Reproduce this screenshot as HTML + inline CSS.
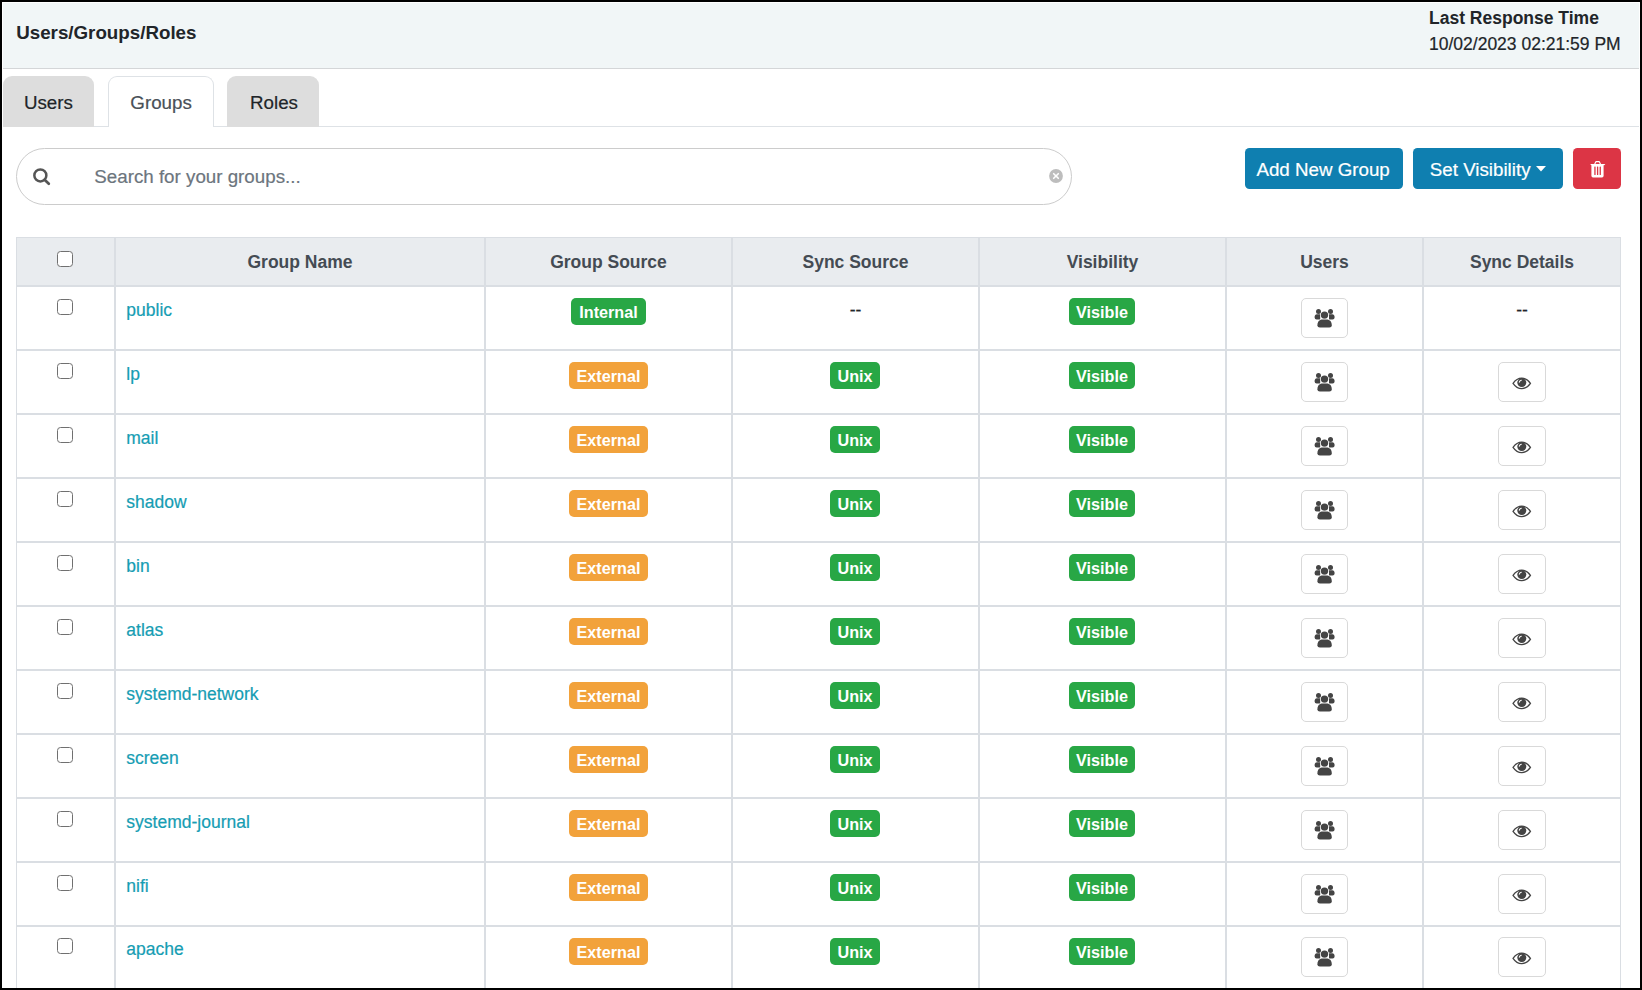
<!DOCTYPE html>
<html><head><meta charset="utf-8"><title>Users/Groups/Roles</title><style>
*{margin:0;padding:0;box-sizing:border-box}
html,body{width:1642px;height:990px;overflow:hidden;background:#000}
body{font-family:"Liberation Sans",sans-serif;position:relative}
.a{position:absolute;line-height:1;white-space:nowrap}
.r{-webkit-text-stroke:0.2px currentColor}

#frame{position:absolute;left:2px;top:2px;width:1638px;height:986px;background:#fff;overflow:hidden}
</style></head>
<body>
<div class="a" style="left:2px;top:2px;width:1638px;height:986px;background:#fff;overflow:hidden">
<div class="a" style="left:-2px;top:-2px;width:1642px;height:990px">
<div class="a" style="left:3px;top:3px;width:1636px;height:65px;background:#f1f6f7"></div>
<div class="a" style="left:3px;top:68px;width:1636px;height:1px;background:#d4d6d8"></div>
<div class="a" style="left:16.2px;top:24.03px;font-size:18.75px;font-weight:bold;color:#212529">Users/Groups/Roles</div>
<div class="a" style="left:1429px;top:10.09px;font-size:17.5px;font-weight:bold;color:#212529">Last Response Time</div>
<div class="a r" style="left:1429px;top:35.99px;font-size:17.5px;color:#212529">10/02/2023 02:21:59 PM</div>
<div class="a" style="left:3px;top:126px;width:1636px;height:1px;background:#dee2e6"></div>
<div class="a" style="left:3px;top:76px;width:91px;height:51px;background:#dddddd;border-radius:9px 9px 0 0"></div>
<div class="a" style="left:108px;top:76px;width:106px;height:51px;background:#fff;border:1px solid #dee2e6;border-bottom:none;border-radius:9px 9px 0 0"></div>
<div class="a" style="left:227px;top:76px;width:92px;height:51px;background:#dddddd;border-radius:9px 9px 0 0"></div>
<div class="a r" style="left:23.9px;top:94.13px;font-size:18.75px;color:#212529">Users</div>
<div class="a r" style="left:130.3px;top:94.13px;font-size:18.75px;color:#495057">Groups</div>
<div class="a r" style="left:250px;top:94.13px;font-size:18.75px;color:#212529">Roles</div>
<div class="a" style="left:16px;top:148px;width:1056px;height:57px;border:1px solid #cccccc;border-radius:28.5px;background:#fff"></div>
<svg class="a" style="left:33px;top:168px" width="18" height="18" viewBox="0 0 18 18"><circle cx="7.35" cy="7.45" r="6.0" fill="none" stroke="#555" stroke-width="2.5"/><line x1="11.6" y1="11.7" x2="15.8" y2="15.8" stroke="#555" stroke-width="2.7" stroke-linecap="round"/></svg>
<div class="a r" style="left:94.3px;top:168.33px;font-size:18.75px;color:#6c757d">Search for your groups...</div>
<svg class="a" style="left:1049px;top:169.2px" width="14" height="14" viewBox="0 0 14 14"><circle cx="7" cy="7" r="6.9" fill="#bdbdbd"/><path d="M4.7 4.7L9.3 9.3M9.3 4.7L4.7 9.3" stroke="#fff" stroke-width="1.6" stroke-linecap="round"/></svg>
<div class="a" style="left:1245px;top:148px;width:158px;height:41px;background:#0f7fb0;border-radius:4.5px"></div>
<div class="a r" style="left:1256.4px;top:161.13px;font-size:18.75px;color:#fff">Add New Group</div>
<div class="a" style="left:1413px;top:148px;width:150px;height:41px;background:#0f7fb0;border-radius:4.5px"></div>
<div class="a r" style="left:1429.8px;top:161.13px;font-size:18.75px;color:#fff">Set Visibility</div>
<svg class="a" style="left:1536px;top:165.5px" width="10" height="6" viewBox="0 0 10 6"><path d="M0 0H10L5 5.5Z" fill="#fff"/></svg>
<div class="a" style="left:1573px;top:148px;width:48px;height:41px;background:#dc3545;border-radius:4.5px"></div>
<svg class="a" style="left:1589.5px;top:160.9px" width="16" height="17" viewBox="0 0 16 17"><path d="M4.7 3.2 L5.6 1.2 Q5.9 0.55 6.6 0.55 H8.6 Q9.3 0.55 9.6 1.2 L10.5 3.2" fill="none" stroke="#fff" stroke-width="1.15"/><path d="M0.1 2.9 H15.4 L14.2 4.3 H1.3 Z" fill="#fff"/><path d="M1.4 4.1 H13.6 V14.8 Q13.6 16.4 12 16.4 H3 Q1.4 16.4 1.4 14.8 Z" fill="#fff"/><rect x="4.3" y="5.5" width="1.3" height="8.5" rx="0.5" fill="#dc3545"/><rect x="6.95" y="5.5" width="1.3" height="8.5" rx="0.5" fill="#dc3545"/><rect x="9.6" y="5.5" width="1.3" height="8.5" rx="0.5" fill="#dc3545"/></svg>
<div class="a" style="left:16px;top:237px;width:1605px;height:50px;background:#e9ecef"></div>
<div class="a" style="left:16px;top:237px;width:1605px;height:1px;background:#dadee3"></div>
<div class="a" style="left:16px;top:285px;width:1605px;height:2px;background:#dadee3"></div>
<div class="a" style="left:16px;top:349px;width:1605px;height:2px;background:#dadee3"></div>
<div class="a" style="left:16px;top:413px;width:1605px;height:2px;background:#dadee3"></div>
<div class="a" style="left:16px;top:477px;width:1605px;height:2px;background:#dadee3"></div>
<div class="a" style="left:16px;top:541px;width:1605px;height:2px;background:#dadee3"></div>
<div class="a" style="left:16px;top:605px;width:1605px;height:2px;background:#dadee3"></div>
<div class="a" style="left:16px;top:669px;width:1605px;height:2px;background:#dadee3"></div>
<div class="a" style="left:16px;top:733px;width:1605px;height:2px;background:#dadee3"></div>
<div class="a" style="left:16px;top:797px;width:1605px;height:2px;background:#dadee3"></div>
<div class="a" style="left:16px;top:861px;width:1605px;height:2px;background:#dadee3"></div>
<div class="a" style="left:16px;top:925px;width:1605px;height:2px;background:#dadee3"></div>
<div class="a" style="left:16px;top:237px;width:1px;height:760px;background:#dadee3"></div>
<div class="a" style="left:114px;top:237px;width:2px;height:760px;background:#dadee3"></div>
<div class="a" style="left:484px;top:237px;width:2px;height:760px;background:#dadee3"></div>
<div class="a" style="left:731px;top:237px;width:2px;height:760px;background:#dadee3"></div>
<div class="a" style="left:978px;top:237px;width:2px;height:760px;background:#dadee3"></div>
<div class="a" style="left:1225px;top:237px;width:2px;height:760px;background:#dadee3"></div>
<div class="a" style="left:1422px;top:237px;width:2px;height:760px;background:#dadee3"></div>
<div class="a" style="left:1620px;top:237px;width:1px;height:760px;background:#dadee3"></div>
<div class="a" style="left:116px;width:368px;text-align:center;top:253.99px;font-size:17.5px;font-weight:bold;color:#444b53">Group Name</div>
<div class="a" style="left:486px;width:245px;text-align:center;top:253.99px;font-size:17.5px;font-weight:bold;color:#444b53">Group Source</div>
<div class="a" style="left:733px;width:245px;text-align:center;top:253.99px;font-size:17.5px;font-weight:bold;color:#444b53">Sync Source</div>
<div class="a" style="left:980px;width:245px;text-align:center;top:253.99px;font-size:17.5px;font-weight:bold;color:#444b53">Visibility</div>
<div class="a" style="left:1227px;width:195px;text-align:center;top:253.99px;font-size:17.5px;font-weight:bold;color:#444b53">Users</div>
<div class="a" style="left:1424px;width:196px;text-align:center;top:253.99px;font-size:17.5px;font-weight:bold;color:#444b53">Sync Details</div>
<div class="a" style="left:57px;top:251px;width:16px;height:16px;border:1.5px solid #707070;border-radius:3.5px;background:#fff"></div>
<div class="a" style="left:57px;top:299px;width:16px;height:16px;border:1.5px solid #707070;border-radius:3.5px;background:#fff"></div>
<div class="a r" style="left:126.3px;top:301.89px;font-size:17.5px;color:#169db3">public</div>
<div class="a" style="left:571px;top:298px;width:75px;height:27px;background:#28a745;border-radius:5px"></div>
<div class="a" style="left:571px;width:75px;text-align:center;top:304.05px;font-size:16.2px;font-weight:bold;color:#fff">Internal</div>
<div class="a r" style="left:733px;width:245px;text-align:center;top:301.89px;font-size:17.5px;color:#212529">--</div>
<div class="a r" style="left:1424px;width:196px;text-align:center;top:301.89px;font-size:17.5px;color:#212529">--</div>
<div class="a" style="left:1069px;top:298px;width:66px;height:27px;background:#28a745;border-radius:5px"></div>
<div class="a" style="left:1069px;width:66px;text-align:center;top:304.05px;font-size:16.2px;font-weight:bold;color:#fff">Visible</div>
<div class="a" style="left:1301px;top:298px;width:47px;height:40px;border:1px solid #d9d9d9;border-radius:5px;background:#fff"></div>
<div class="a" style="left:1314px;top:308px"><svg width="22" height="21" viewBox="0 0 22 21" style="display:block"><circle cx="4.5" cy="3.4" r="2.5" fill="#444"/><circle cx="16.5" cy="3.4" r="2.5" fill="#444"/><path d="M0.6 9.6 Q0.4 6.3 3 6.2 H6.2 V11.5 H2.6 Q0.7 11.5 0.6 9.6 Z" fill="#444"/><path d="M20.6 9.6 Q20.8 6.3 18.2 6.2 H15 V11.5 H18.6 Q20.5 11.5 20.6 9.6 Z" fill="#444"/><g stroke="#fff" stroke-width="0.9" paint-order="stroke" fill="#444"><circle cx="10.5" cy="7.1" r="3.7"/><path d="M3.4 17.2 C3.4 13.6 5.2 11.4 8.6 11.4 H12.6 C16 11.4 17.8 13.6 17.8 17.2 Q17.8 19.6 15.4 19.6 H5.8 Q3.4 19.6 3.4 17.2 Z"/></g></svg></div>
<div class="a" style="left:57px;top:363px;width:16px;height:16px;border:1.5px solid #707070;border-radius:3.5px;background:#fff"></div>
<div class="a r" style="left:126.3px;top:365.89px;font-size:17.5px;color:#169db3">lp</div>
<div class="a" style="left:569px;top:362px;width:79px;height:27px;background:#f2a23b;border-radius:5px"></div>
<div class="a" style="left:569px;width:79px;text-align:center;top:368.05px;font-size:16.2px;font-weight:bold;color:#fff">External</div>
<div class="a" style="left:830px;top:362px;width:50px;height:27px;background:#28a745;border-radius:5px"></div>
<div class="a" style="left:830px;width:50px;text-align:center;top:368.05px;font-size:16.2px;font-weight:bold;color:#fff">Unix</div>
<div class="a" style="left:1498px;top:362px;width:48px;height:40px;border:1px solid #d9d9d9;border-radius:5px;background:#fff"></div>
<div class="a" style="left:1512px;top:376.5px"><svg width="20" height="13" viewBox="0 0 20 13" style="display:block"><path d="M1.05 6.4 C3.5 2.8 6.5 1.15 9.75 1.15 C13 1.15 16 2.8 18.45 6.4 C16 10 13 11.65 9.75 11.65 C6.5 11.65 3.5 10 1.05 6.4 Z" fill="none" stroke="#444" stroke-width="1.3"/><circle cx="9.8" cy="5.6" r="4.5" fill="#444"/><path d="M7.3 5.2 Q7.7 3.6 9.3 3.2" fill="none" stroke="#fff" stroke-width="1.1" stroke-linecap="round"/></svg></div>
<div class="a" style="left:1069px;top:362px;width:66px;height:27px;background:#28a745;border-radius:5px"></div>
<div class="a" style="left:1069px;width:66px;text-align:center;top:368.05px;font-size:16.2px;font-weight:bold;color:#fff">Visible</div>
<div class="a" style="left:1301px;top:362px;width:47px;height:40px;border:1px solid #d9d9d9;border-radius:5px;background:#fff"></div>
<div class="a" style="left:1314px;top:372px"><svg width="22" height="21" viewBox="0 0 22 21" style="display:block"><circle cx="4.5" cy="3.4" r="2.5" fill="#444"/><circle cx="16.5" cy="3.4" r="2.5" fill="#444"/><path d="M0.6 9.6 Q0.4 6.3 3 6.2 H6.2 V11.5 H2.6 Q0.7 11.5 0.6 9.6 Z" fill="#444"/><path d="M20.6 9.6 Q20.8 6.3 18.2 6.2 H15 V11.5 H18.6 Q20.5 11.5 20.6 9.6 Z" fill="#444"/><g stroke="#fff" stroke-width="0.9" paint-order="stroke" fill="#444"><circle cx="10.5" cy="7.1" r="3.7"/><path d="M3.4 17.2 C3.4 13.6 5.2 11.4 8.6 11.4 H12.6 C16 11.4 17.8 13.6 17.8 17.2 Q17.8 19.6 15.4 19.6 H5.8 Q3.4 19.6 3.4 17.2 Z"/></g></svg></div>
<div class="a" style="left:57px;top:427px;width:16px;height:16px;border:1.5px solid #707070;border-radius:3.5px;background:#fff"></div>
<div class="a r" style="left:126.3px;top:429.89px;font-size:17.5px;color:#169db3">mail</div>
<div class="a" style="left:569px;top:426px;width:79px;height:27px;background:#f2a23b;border-radius:5px"></div>
<div class="a" style="left:569px;width:79px;text-align:center;top:432.05px;font-size:16.2px;font-weight:bold;color:#fff">External</div>
<div class="a" style="left:830px;top:426px;width:50px;height:27px;background:#28a745;border-radius:5px"></div>
<div class="a" style="left:830px;width:50px;text-align:center;top:432.05px;font-size:16.2px;font-weight:bold;color:#fff">Unix</div>
<div class="a" style="left:1498px;top:426px;width:48px;height:40px;border:1px solid #d9d9d9;border-radius:5px;background:#fff"></div>
<div class="a" style="left:1512px;top:440.5px"><svg width="20" height="13" viewBox="0 0 20 13" style="display:block"><path d="M1.05 6.4 C3.5 2.8 6.5 1.15 9.75 1.15 C13 1.15 16 2.8 18.45 6.4 C16 10 13 11.65 9.75 11.65 C6.5 11.65 3.5 10 1.05 6.4 Z" fill="none" stroke="#444" stroke-width="1.3"/><circle cx="9.8" cy="5.6" r="4.5" fill="#444"/><path d="M7.3 5.2 Q7.7 3.6 9.3 3.2" fill="none" stroke="#fff" stroke-width="1.1" stroke-linecap="round"/></svg></div>
<div class="a" style="left:1069px;top:426px;width:66px;height:27px;background:#28a745;border-radius:5px"></div>
<div class="a" style="left:1069px;width:66px;text-align:center;top:432.05px;font-size:16.2px;font-weight:bold;color:#fff">Visible</div>
<div class="a" style="left:1301px;top:426px;width:47px;height:40px;border:1px solid #d9d9d9;border-radius:5px;background:#fff"></div>
<div class="a" style="left:1314px;top:436px"><svg width="22" height="21" viewBox="0 0 22 21" style="display:block"><circle cx="4.5" cy="3.4" r="2.5" fill="#444"/><circle cx="16.5" cy="3.4" r="2.5" fill="#444"/><path d="M0.6 9.6 Q0.4 6.3 3 6.2 H6.2 V11.5 H2.6 Q0.7 11.5 0.6 9.6 Z" fill="#444"/><path d="M20.6 9.6 Q20.8 6.3 18.2 6.2 H15 V11.5 H18.6 Q20.5 11.5 20.6 9.6 Z" fill="#444"/><g stroke="#fff" stroke-width="0.9" paint-order="stroke" fill="#444"><circle cx="10.5" cy="7.1" r="3.7"/><path d="M3.4 17.2 C3.4 13.6 5.2 11.4 8.6 11.4 H12.6 C16 11.4 17.8 13.6 17.8 17.2 Q17.8 19.6 15.4 19.6 H5.8 Q3.4 19.6 3.4 17.2 Z"/></g></svg></div>
<div class="a" style="left:57px;top:491px;width:16px;height:16px;border:1.5px solid #707070;border-radius:3.5px;background:#fff"></div>
<div class="a r" style="left:126.3px;top:493.89px;font-size:17.5px;color:#169db3">shadow</div>
<div class="a" style="left:569px;top:490px;width:79px;height:27px;background:#f2a23b;border-radius:5px"></div>
<div class="a" style="left:569px;width:79px;text-align:center;top:496.05px;font-size:16.2px;font-weight:bold;color:#fff">External</div>
<div class="a" style="left:830px;top:490px;width:50px;height:27px;background:#28a745;border-radius:5px"></div>
<div class="a" style="left:830px;width:50px;text-align:center;top:496.05px;font-size:16.2px;font-weight:bold;color:#fff">Unix</div>
<div class="a" style="left:1498px;top:490px;width:48px;height:40px;border:1px solid #d9d9d9;border-radius:5px;background:#fff"></div>
<div class="a" style="left:1512px;top:504.5px"><svg width="20" height="13" viewBox="0 0 20 13" style="display:block"><path d="M1.05 6.4 C3.5 2.8 6.5 1.15 9.75 1.15 C13 1.15 16 2.8 18.45 6.4 C16 10 13 11.65 9.75 11.65 C6.5 11.65 3.5 10 1.05 6.4 Z" fill="none" stroke="#444" stroke-width="1.3"/><circle cx="9.8" cy="5.6" r="4.5" fill="#444"/><path d="M7.3 5.2 Q7.7 3.6 9.3 3.2" fill="none" stroke="#fff" stroke-width="1.1" stroke-linecap="round"/></svg></div>
<div class="a" style="left:1069px;top:490px;width:66px;height:27px;background:#28a745;border-radius:5px"></div>
<div class="a" style="left:1069px;width:66px;text-align:center;top:496.05px;font-size:16.2px;font-weight:bold;color:#fff">Visible</div>
<div class="a" style="left:1301px;top:490px;width:47px;height:40px;border:1px solid #d9d9d9;border-radius:5px;background:#fff"></div>
<div class="a" style="left:1314px;top:500px"><svg width="22" height="21" viewBox="0 0 22 21" style="display:block"><circle cx="4.5" cy="3.4" r="2.5" fill="#444"/><circle cx="16.5" cy="3.4" r="2.5" fill="#444"/><path d="M0.6 9.6 Q0.4 6.3 3 6.2 H6.2 V11.5 H2.6 Q0.7 11.5 0.6 9.6 Z" fill="#444"/><path d="M20.6 9.6 Q20.8 6.3 18.2 6.2 H15 V11.5 H18.6 Q20.5 11.5 20.6 9.6 Z" fill="#444"/><g stroke="#fff" stroke-width="0.9" paint-order="stroke" fill="#444"><circle cx="10.5" cy="7.1" r="3.7"/><path d="M3.4 17.2 C3.4 13.6 5.2 11.4 8.6 11.4 H12.6 C16 11.4 17.8 13.6 17.8 17.2 Q17.8 19.6 15.4 19.6 H5.8 Q3.4 19.6 3.4 17.2 Z"/></g></svg></div>
<div class="a" style="left:57px;top:555px;width:16px;height:16px;border:1.5px solid #707070;border-radius:3.5px;background:#fff"></div>
<div class="a r" style="left:126.3px;top:557.89px;font-size:17.5px;color:#169db3">bin</div>
<div class="a" style="left:569px;top:554px;width:79px;height:27px;background:#f2a23b;border-radius:5px"></div>
<div class="a" style="left:569px;width:79px;text-align:center;top:560.05px;font-size:16.2px;font-weight:bold;color:#fff">External</div>
<div class="a" style="left:830px;top:554px;width:50px;height:27px;background:#28a745;border-radius:5px"></div>
<div class="a" style="left:830px;width:50px;text-align:center;top:560.05px;font-size:16.2px;font-weight:bold;color:#fff">Unix</div>
<div class="a" style="left:1498px;top:554px;width:48px;height:40px;border:1px solid #d9d9d9;border-radius:5px;background:#fff"></div>
<div class="a" style="left:1512px;top:568.5px"><svg width="20" height="13" viewBox="0 0 20 13" style="display:block"><path d="M1.05 6.4 C3.5 2.8 6.5 1.15 9.75 1.15 C13 1.15 16 2.8 18.45 6.4 C16 10 13 11.65 9.75 11.65 C6.5 11.65 3.5 10 1.05 6.4 Z" fill="none" stroke="#444" stroke-width="1.3"/><circle cx="9.8" cy="5.6" r="4.5" fill="#444"/><path d="M7.3 5.2 Q7.7 3.6 9.3 3.2" fill="none" stroke="#fff" stroke-width="1.1" stroke-linecap="round"/></svg></div>
<div class="a" style="left:1069px;top:554px;width:66px;height:27px;background:#28a745;border-radius:5px"></div>
<div class="a" style="left:1069px;width:66px;text-align:center;top:560.05px;font-size:16.2px;font-weight:bold;color:#fff">Visible</div>
<div class="a" style="left:1301px;top:554px;width:47px;height:40px;border:1px solid #d9d9d9;border-radius:5px;background:#fff"></div>
<div class="a" style="left:1314px;top:564px"><svg width="22" height="21" viewBox="0 0 22 21" style="display:block"><circle cx="4.5" cy="3.4" r="2.5" fill="#444"/><circle cx="16.5" cy="3.4" r="2.5" fill="#444"/><path d="M0.6 9.6 Q0.4 6.3 3 6.2 H6.2 V11.5 H2.6 Q0.7 11.5 0.6 9.6 Z" fill="#444"/><path d="M20.6 9.6 Q20.8 6.3 18.2 6.2 H15 V11.5 H18.6 Q20.5 11.5 20.6 9.6 Z" fill="#444"/><g stroke="#fff" stroke-width="0.9" paint-order="stroke" fill="#444"><circle cx="10.5" cy="7.1" r="3.7"/><path d="M3.4 17.2 C3.4 13.6 5.2 11.4 8.6 11.4 H12.6 C16 11.4 17.8 13.6 17.8 17.2 Q17.8 19.6 15.4 19.6 H5.8 Q3.4 19.6 3.4 17.2 Z"/></g></svg></div>
<div class="a" style="left:57px;top:619px;width:16px;height:16px;border:1.5px solid #707070;border-radius:3.5px;background:#fff"></div>
<div class="a r" style="left:126.3px;top:621.89px;font-size:17.5px;color:#169db3">atlas</div>
<div class="a" style="left:569px;top:618px;width:79px;height:27px;background:#f2a23b;border-radius:5px"></div>
<div class="a" style="left:569px;width:79px;text-align:center;top:624.05px;font-size:16.2px;font-weight:bold;color:#fff">External</div>
<div class="a" style="left:830px;top:618px;width:50px;height:27px;background:#28a745;border-radius:5px"></div>
<div class="a" style="left:830px;width:50px;text-align:center;top:624.05px;font-size:16.2px;font-weight:bold;color:#fff">Unix</div>
<div class="a" style="left:1498px;top:618px;width:48px;height:40px;border:1px solid #d9d9d9;border-radius:5px;background:#fff"></div>
<div class="a" style="left:1512px;top:632.5px"><svg width="20" height="13" viewBox="0 0 20 13" style="display:block"><path d="M1.05 6.4 C3.5 2.8 6.5 1.15 9.75 1.15 C13 1.15 16 2.8 18.45 6.4 C16 10 13 11.65 9.75 11.65 C6.5 11.65 3.5 10 1.05 6.4 Z" fill="none" stroke="#444" stroke-width="1.3"/><circle cx="9.8" cy="5.6" r="4.5" fill="#444"/><path d="M7.3 5.2 Q7.7 3.6 9.3 3.2" fill="none" stroke="#fff" stroke-width="1.1" stroke-linecap="round"/></svg></div>
<div class="a" style="left:1069px;top:618px;width:66px;height:27px;background:#28a745;border-radius:5px"></div>
<div class="a" style="left:1069px;width:66px;text-align:center;top:624.05px;font-size:16.2px;font-weight:bold;color:#fff">Visible</div>
<div class="a" style="left:1301px;top:618px;width:47px;height:40px;border:1px solid #d9d9d9;border-radius:5px;background:#fff"></div>
<div class="a" style="left:1314px;top:628px"><svg width="22" height="21" viewBox="0 0 22 21" style="display:block"><circle cx="4.5" cy="3.4" r="2.5" fill="#444"/><circle cx="16.5" cy="3.4" r="2.5" fill="#444"/><path d="M0.6 9.6 Q0.4 6.3 3 6.2 H6.2 V11.5 H2.6 Q0.7 11.5 0.6 9.6 Z" fill="#444"/><path d="M20.6 9.6 Q20.8 6.3 18.2 6.2 H15 V11.5 H18.6 Q20.5 11.5 20.6 9.6 Z" fill="#444"/><g stroke="#fff" stroke-width="0.9" paint-order="stroke" fill="#444"><circle cx="10.5" cy="7.1" r="3.7"/><path d="M3.4 17.2 C3.4 13.6 5.2 11.4 8.6 11.4 H12.6 C16 11.4 17.8 13.6 17.8 17.2 Q17.8 19.6 15.4 19.6 H5.8 Q3.4 19.6 3.4 17.2 Z"/></g></svg></div>
<div class="a" style="left:57px;top:683px;width:16px;height:16px;border:1.5px solid #707070;border-radius:3.5px;background:#fff"></div>
<div class="a r" style="left:126.3px;top:685.89px;font-size:17.5px;color:#169db3">systemd-network</div>
<div class="a" style="left:569px;top:682px;width:79px;height:27px;background:#f2a23b;border-radius:5px"></div>
<div class="a" style="left:569px;width:79px;text-align:center;top:688.05px;font-size:16.2px;font-weight:bold;color:#fff">External</div>
<div class="a" style="left:830px;top:682px;width:50px;height:27px;background:#28a745;border-radius:5px"></div>
<div class="a" style="left:830px;width:50px;text-align:center;top:688.05px;font-size:16.2px;font-weight:bold;color:#fff">Unix</div>
<div class="a" style="left:1498px;top:682px;width:48px;height:40px;border:1px solid #d9d9d9;border-radius:5px;background:#fff"></div>
<div class="a" style="left:1512px;top:696.5px"><svg width="20" height="13" viewBox="0 0 20 13" style="display:block"><path d="M1.05 6.4 C3.5 2.8 6.5 1.15 9.75 1.15 C13 1.15 16 2.8 18.45 6.4 C16 10 13 11.65 9.75 11.65 C6.5 11.65 3.5 10 1.05 6.4 Z" fill="none" stroke="#444" stroke-width="1.3"/><circle cx="9.8" cy="5.6" r="4.5" fill="#444"/><path d="M7.3 5.2 Q7.7 3.6 9.3 3.2" fill="none" stroke="#fff" stroke-width="1.1" stroke-linecap="round"/></svg></div>
<div class="a" style="left:1069px;top:682px;width:66px;height:27px;background:#28a745;border-radius:5px"></div>
<div class="a" style="left:1069px;width:66px;text-align:center;top:688.05px;font-size:16.2px;font-weight:bold;color:#fff">Visible</div>
<div class="a" style="left:1301px;top:682px;width:47px;height:40px;border:1px solid #d9d9d9;border-radius:5px;background:#fff"></div>
<div class="a" style="left:1314px;top:692px"><svg width="22" height="21" viewBox="0 0 22 21" style="display:block"><circle cx="4.5" cy="3.4" r="2.5" fill="#444"/><circle cx="16.5" cy="3.4" r="2.5" fill="#444"/><path d="M0.6 9.6 Q0.4 6.3 3 6.2 H6.2 V11.5 H2.6 Q0.7 11.5 0.6 9.6 Z" fill="#444"/><path d="M20.6 9.6 Q20.8 6.3 18.2 6.2 H15 V11.5 H18.6 Q20.5 11.5 20.6 9.6 Z" fill="#444"/><g stroke="#fff" stroke-width="0.9" paint-order="stroke" fill="#444"><circle cx="10.5" cy="7.1" r="3.7"/><path d="M3.4 17.2 C3.4 13.6 5.2 11.4 8.6 11.4 H12.6 C16 11.4 17.8 13.6 17.8 17.2 Q17.8 19.6 15.4 19.6 H5.8 Q3.4 19.6 3.4 17.2 Z"/></g></svg></div>
<div class="a" style="left:57px;top:747px;width:16px;height:16px;border:1.5px solid #707070;border-radius:3.5px;background:#fff"></div>
<div class="a r" style="left:126.3px;top:749.89px;font-size:17.5px;color:#169db3">screen</div>
<div class="a" style="left:569px;top:746px;width:79px;height:27px;background:#f2a23b;border-radius:5px"></div>
<div class="a" style="left:569px;width:79px;text-align:center;top:752.05px;font-size:16.2px;font-weight:bold;color:#fff">External</div>
<div class="a" style="left:830px;top:746px;width:50px;height:27px;background:#28a745;border-radius:5px"></div>
<div class="a" style="left:830px;width:50px;text-align:center;top:752.05px;font-size:16.2px;font-weight:bold;color:#fff">Unix</div>
<div class="a" style="left:1498px;top:746px;width:48px;height:40px;border:1px solid #d9d9d9;border-radius:5px;background:#fff"></div>
<div class="a" style="left:1512px;top:760.5px"><svg width="20" height="13" viewBox="0 0 20 13" style="display:block"><path d="M1.05 6.4 C3.5 2.8 6.5 1.15 9.75 1.15 C13 1.15 16 2.8 18.45 6.4 C16 10 13 11.65 9.75 11.65 C6.5 11.65 3.5 10 1.05 6.4 Z" fill="none" stroke="#444" stroke-width="1.3"/><circle cx="9.8" cy="5.6" r="4.5" fill="#444"/><path d="M7.3 5.2 Q7.7 3.6 9.3 3.2" fill="none" stroke="#fff" stroke-width="1.1" stroke-linecap="round"/></svg></div>
<div class="a" style="left:1069px;top:746px;width:66px;height:27px;background:#28a745;border-radius:5px"></div>
<div class="a" style="left:1069px;width:66px;text-align:center;top:752.05px;font-size:16.2px;font-weight:bold;color:#fff">Visible</div>
<div class="a" style="left:1301px;top:746px;width:47px;height:40px;border:1px solid #d9d9d9;border-radius:5px;background:#fff"></div>
<div class="a" style="left:1314px;top:756px"><svg width="22" height="21" viewBox="0 0 22 21" style="display:block"><circle cx="4.5" cy="3.4" r="2.5" fill="#444"/><circle cx="16.5" cy="3.4" r="2.5" fill="#444"/><path d="M0.6 9.6 Q0.4 6.3 3 6.2 H6.2 V11.5 H2.6 Q0.7 11.5 0.6 9.6 Z" fill="#444"/><path d="M20.6 9.6 Q20.8 6.3 18.2 6.2 H15 V11.5 H18.6 Q20.5 11.5 20.6 9.6 Z" fill="#444"/><g stroke="#fff" stroke-width="0.9" paint-order="stroke" fill="#444"><circle cx="10.5" cy="7.1" r="3.7"/><path d="M3.4 17.2 C3.4 13.6 5.2 11.4 8.6 11.4 H12.6 C16 11.4 17.8 13.6 17.8 17.2 Q17.8 19.6 15.4 19.6 H5.8 Q3.4 19.6 3.4 17.2 Z"/></g></svg></div>
<div class="a" style="left:57px;top:811px;width:16px;height:16px;border:1.5px solid #707070;border-radius:3.5px;background:#fff"></div>
<div class="a r" style="left:126.3px;top:813.89px;font-size:17.5px;color:#169db3">systemd-journal</div>
<div class="a" style="left:569px;top:810px;width:79px;height:27px;background:#f2a23b;border-radius:5px"></div>
<div class="a" style="left:569px;width:79px;text-align:center;top:816.05px;font-size:16.2px;font-weight:bold;color:#fff">External</div>
<div class="a" style="left:830px;top:810px;width:50px;height:27px;background:#28a745;border-radius:5px"></div>
<div class="a" style="left:830px;width:50px;text-align:center;top:816.05px;font-size:16.2px;font-weight:bold;color:#fff">Unix</div>
<div class="a" style="left:1498px;top:810px;width:48px;height:40px;border:1px solid #d9d9d9;border-radius:5px;background:#fff"></div>
<div class="a" style="left:1512px;top:824.5px"><svg width="20" height="13" viewBox="0 0 20 13" style="display:block"><path d="M1.05 6.4 C3.5 2.8 6.5 1.15 9.75 1.15 C13 1.15 16 2.8 18.45 6.4 C16 10 13 11.65 9.75 11.65 C6.5 11.65 3.5 10 1.05 6.4 Z" fill="none" stroke="#444" stroke-width="1.3"/><circle cx="9.8" cy="5.6" r="4.5" fill="#444"/><path d="M7.3 5.2 Q7.7 3.6 9.3 3.2" fill="none" stroke="#fff" stroke-width="1.1" stroke-linecap="round"/></svg></div>
<div class="a" style="left:1069px;top:810px;width:66px;height:27px;background:#28a745;border-radius:5px"></div>
<div class="a" style="left:1069px;width:66px;text-align:center;top:816.05px;font-size:16.2px;font-weight:bold;color:#fff">Visible</div>
<div class="a" style="left:1301px;top:810px;width:47px;height:40px;border:1px solid #d9d9d9;border-radius:5px;background:#fff"></div>
<div class="a" style="left:1314px;top:820px"><svg width="22" height="21" viewBox="0 0 22 21" style="display:block"><circle cx="4.5" cy="3.4" r="2.5" fill="#444"/><circle cx="16.5" cy="3.4" r="2.5" fill="#444"/><path d="M0.6 9.6 Q0.4 6.3 3 6.2 H6.2 V11.5 H2.6 Q0.7 11.5 0.6 9.6 Z" fill="#444"/><path d="M20.6 9.6 Q20.8 6.3 18.2 6.2 H15 V11.5 H18.6 Q20.5 11.5 20.6 9.6 Z" fill="#444"/><g stroke="#fff" stroke-width="0.9" paint-order="stroke" fill="#444"><circle cx="10.5" cy="7.1" r="3.7"/><path d="M3.4 17.2 C3.4 13.6 5.2 11.4 8.6 11.4 H12.6 C16 11.4 17.8 13.6 17.8 17.2 Q17.8 19.6 15.4 19.6 H5.8 Q3.4 19.6 3.4 17.2 Z"/></g></svg></div>
<div class="a" style="left:57px;top:875px;width:16px;height:16px;border:1.5px solid #707070;border-radius:3.5px;background:#fff"></div>
<div class="a r" style="left:126.3px;top:877.89px;font-size:17.5px;color:#169db3">nifi</div>
<div class="a" style="left:569px;top:874px;width:79px;height:27px;background:#f2a23b;border-radius:5px"></div>
<div class="a" style="left:569px;width:79px;text-align:center;top:880.05px;font-size:16.2px;font-weight:bold;color:#fff">External</div>
<div class="a" style="left:830px;top:874px;width:50px;height:27px;background:#28a745;border-radius:5px"></div>
<div class="a" style="left:830px;width:50px;text-align:center;top:880.05px;font-size:16.2px;font-weight:bold;color:#fff">Unix</div>
<div class="a" style="left:1498px;top:874px;width:48px;height:40px;border:1px solid #d9d9d9;border-radius:5px;background:#fff"></div>
<div class="a" style="left:1512px;top:888.5px"><svg width="20" height="13" viewBox="0 0 20 13" style="display:block"><path d="M1.05 6.4 C3.5 2.8 6.5 1.15 9.75 1.15 C13 1.15 16 2.8 18.45 6.4 C16 10 13 11.65 9.75 11.65 C6.5 11.65 3.5 10 1.05 6.4 Z" fill="none" stroke="#444" stroke-width="1.3"/><circle cx="9.8" cy="5.6" r="4.5" fill="#444"/><path d="M7.3 5.2 Q7.7 3.6 9.3 3.2" fill="none" stroke="#fff" stroke-width="1.1" stroke-linecap="round"/></svg></div>
<div class="a" style="left:1069px;top:874px;width:66px;height:27px;background:#28a745;border-radius:5px"></div>
<div class="a" style="left:1069px;width:66px;text-align:center;top:880.05px;font-size:16.2px;font-weight:bold;color:#fff">Visible</div>
<div class="a" style="left:1301px;top:874px;width:47px;height:40px;border:1px solid #d9d9d9;border-radius:5px;background:#fff"></div>
<div class="a" style="left:1314px;top:884px"><svg width="22" height="21" viewBox="0 0 22 21" style="display:block"><circle cx="4.5" cy="3.4" r="2.5" fill="#444"/><circle cx="16.5" cy="3.4" r="2.5" fill="#444"/><path d="M0.6 9.6 Q0.4 6.3 3 6.2 H6.2 V11.5 H2.6 Q0.7 11.5 0.6 9.6 Z" fill="#444"/><path d="M20.6 9.6 Q20.8 6.3 18.2 6.2 H15 V11.5 H18.6 Q20.5 11.5 20.6 9.6 Z" fill="#444"/><g stroke="#fff" stroke-width="0.9" paint-order="stroke" fill="#444"><circle cx="10.5" cy="7.1" r="3.7"/><path d="M3.4 17.2 C3.4 13.6 5.2 11.4 8.6 11.4 H12.6 C16 11.4 17.8 13.6 17.8 17.2 Q17.8 19.6 15.4 19.6 H5.8 Q3.4 19.6 3.4 17.2 Z"/></g></svg></div>
<div class="a" style="left:57px;top:938px;width:16px;height:16px;border:1.5px solid #707070;border-radius:3.5px;background:#fff"></div>
<div class="a r" style="left:126.3px;top:940.89px;font-size:17.5px;color:#169db3">apache</div>
<div class="a" style="left:569px;top:938px;width:79px;height:27px;background:#f2a23b;border-radius:5px"></div>
<div class="a" style="left:569px;width:79px;text-align:center;top:944.05px;font-size:16.2px;font-weight:bold;color:#fff">External</div>
<div class="a" style="left:830px;top:938px;width:50px;height:27px;background:#28a745;border-radius:5px"></div>
<div class="a" style="left:830px;width:50px;text-align:center;top:944.05px;font-size:16.2px;font-weight:bold;color:#fff">Unix</div>
<div class="a" style="left:1498px;top:937px;width:48px;height:40px;border:1px solid #d9d9d9;border-radius:5px;background:#fff"></div>
<div class="a" style="left:1512px;top:951.5px"><svg width="20" height="13" viewBox="0 0 20 13" style="display:block"><path d="M1.05 6.4 C3.5 2.8 6.5 1.15 9.75 1.15 C13 1.15 16 2.8 18.45 6.4 C16 10 13 11.65 9.75 11.65 C6.5 11.65 3.5 10 1.05 6.4 Z" fill="none" stroke="#444" stroke-width="1.3"/><circle cx="9.8" cy="5.6" r="4.5" fill="#444"/><path d="M7.3 5.2 Q7.7 3.6 9.3 3.2" fill="none" stroke="#fff" stroke-width="1.1" stroke-linecap="round"/></svg></div>
<div class="a" style="left:1069px;top:938px;width:66px;height:27px;background:#28a745;border-radius:5px"></div>
<div class="a" style="left:1069px;width:66px;text-align:center;top:944.05px;font-size:16.2px;font-weight:bold;color:#fff">Visible</div>
<div class="a" style="left:1301px;top:937px;width:47px;height:40px;border:1px solid #d9d9d9;border-radius:5px;background:#fff"></div>
<div class="a" style="left:1314px;top:947px"><svg width="22" height="21" viewBox="0 0 22 21" style="display:block"><circle cx="4.5" cy="3.4" r="2.5" fill="#444"/><circle cx="16.5" cy="3.4" r="2.5" fill="#444"/><path d="M0.6 9.6 Q0.4 6.3 3 6.2 H6.2 V11.5 H2.6 Q0.7 11.5 0.6 9.6 Z" fill="#444"/><path d="M20.6 9.6 Q20.8 6.3 18.2 6.2 H15 V11.5 H18.6 Q20.5 11.5 20.6 9.6 Z" fill="#444"/><g stroke="#fff" stroke-width="0.9" paint-order="stroke" fill="#444"><circle cx="10.5" cy="7.1" r="3.7"/><path d="M3.4 17.2 C3.4 13.6 5.2 11.4 8.6 11.4 H12.6 C16 11.4 17.8 13.6 17.8 17.2 Q17.8 19.6 15.4 19.6 H5.8 Q3.4 19.6 3.4 17.2 Z"/></g></svg></div>
</div></div>
</body></html>
